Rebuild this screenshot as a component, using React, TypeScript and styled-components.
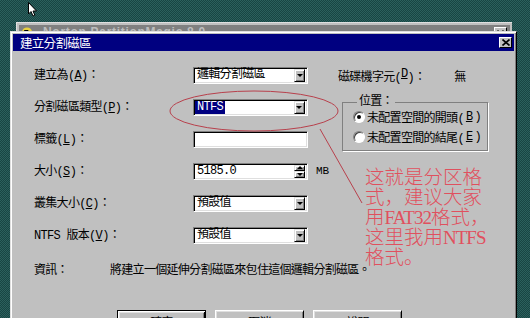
import React from 'react'
import styled, { createGlobalStyle } from 'styled-components'

const GlobalStyle = createGlobalStyle`
  html, body {
    margin: 0;
    padding: 0;
    overflow: hidden;
  }
  body {
    font-family: "Liberation Mono", "Noto Sans CJK TC", monospace;
  }
`

const Desktop = styled.div`
  position: relative;
  width: 530px;
  height: 318px;
  overflow: hidden;
  background: repeating-conic-gradient(#184543 0 25%, #2b605d 0 50%) 0 0 / 2px 2px;
`

const Cursor = styled.svg`
  position: absolute;
  left: 28px;
  top: 2px;
`

/* the PartitionMagic main window behind the dialog */
const BackWindow = styled.div`
  position: absolute;
  left: 16px;
  top: 22px;
  width: 496px;
  height: 300px;
  box-sizing: border-box;
  background: #c0c0c0;
  border-top: 1px solid #dfdfdf;
  border-left: 1px solid #dfdfdf;
  padding: 2px;
`

const BackTitle = styled.div`
  height: 14px;
  background: #808080;
  display: flex;
  align-items: center;
  gap: 10px;
  padding: 0 3px;
  color: #bdbdbd;
  font: bold 12px "Liberation Sans", sans-serif;
  letter-spacing: 0.7px;
`

const BackTitleText = styled.span`
  flex: 1;
`

const SmallButton = styled.div`
  width: 13px;
  height: 11px;
  box-sizing: border-box;
  background: #c0c0c0;
  border: 1px solid;
  border-color: #fff #000 #000 #fff;
  display: flex;
  align-items: center;
  justify-content: center;
`

const Dialog = styled.div`
  position: absolute;
  left: 10px;
  top: 31px;
  width: 507px;
  height: 300px;
  box-sizing: border-box;
  background: #c0c0c0;
  border: 1px solid;
  border-color: #dfdfdf #000 #000 #dfdfdf;
  box-shadow: inset 1px 1px 0 #fff, inset -1px -1px 0 #808080;
  padding: 2px;
  display: flex;
  flex-direction: column;
  font-size: 12px;
  letter-spacing: -0.7px;
  color: #000;
`

const TitleBar = styled.div`
  height: 17px;
  background: #000080;
  color: #fff;
  display: flex;
  align-items: center;
  justify-content: space-between;
  padding: 0 2px 0 7px;
  font-size: 12.5px;
`

const Body = styled.div`
  padding: 8px 0 0 21px;
  display: flex;
  flex-direction: column;
`

const FormGrid = styled.div`
  display: grid;
  grid-template-columns: 159px 115px 1fr;
  grid-auto-rows: 32px;
  align-items: center;
`

const Label = styled.div`
  grid-column: 1;
  line-height: 14px;
  padding-top: 2px;
  white-space: nowrap;
`

const Sunken = styled.div<{ $width?: number }>`
  grid-column: 2;
  width: ${p => p.$width ?? 115}px;
  height: 17px;
  box-sizing: border-box;
  background: #fff;
  border: 1px solid;
  border-color: #808080 #fff #fff #808080;
  box-shadow: inset 1px 1px 0 #000, inset -1px -1px 0 #dfdfdf;
  display: flex;
  align-items: center;
  padding: 2px 2px 2px 1px;
  white-space: nowrap;
`

const FieldText = styled.span<{ $selected?: boolean }>`
  flex: 1;
  padding: 0 2px;
  line-height: 13px;
  ${p => p.$selected && `
    flex: 0 0 auto;
    background: #000080;
    color: #fff;
    margin-right: auto;
  `}
`

const ArrowButton = styled.div`
  width: 11px;
  height: 13px;
  box-sizing: border-box;
  flex: 0 0 auto;
  margin-left: auto;
  background: #c0c0c0;
  border: 1px solid;
  border-color: #dfdfdf #000 #000 #dfdfdf;
  box-shadow: inset 1px 1px 0 #fff, inset -1px -1px 0 #808080;
  display: flex;
  align-items: center;
  justify-content: center;
`

const Triangle = styled.div<{ $up?: boolean }>`
  width: 0;
  height: 0;
  border-left: 3px solid transparent;
  border-right: 3px solid transparent;
  ${p => (p.$up ? 'border-bottom: 3px solid #000;' : 'border-top: 3px solid #000;')}
`

const SpinColumn = styled.div`
  display: flex;
  flex-direction: column;
  margin-left: auto;
  height: 13px;
`

const SpinPart = styled(ArrowButton)`
  height: 6.5px;
  margin-left: 0;
`

const SizeCell = styled.div`
  grid-column: 2 / span 2;
  display: flex;
  align-items: center;
  gap: 8px;
`

const Unit = styled.span`
  font-size: 11px;
  letter-spacing: 0;
`

const DriveInfo = styled.div`
  grid-column: 3;
  grid-row: 1;
  padding: 2px 0 0 30px;
  display: flex;
  white-space: nowrap;
`

const DriveValue = styled.span`
  margin-left: 29px;
`

const GroupBox = styled.fieldset`
  grid-column: 3;
  grid-row: 2 / span 2;
  align-self: start;
  margin: 4px 0 0 34px;
  width: 146px;
  box-sizing: border-box;
  padding: 0 0 4px 10px;
  border: 1px solid #808080;
  box-shadow: 1px 1px 0 #fff;
  min-width: 0;
`

const Legend = styled.legend`
  padding: 0 2px;
  margin-left: 4px;
  line-height: 14px;
`

const RadioList = styled.div`
  display: flex;
  flex-direction: column;
  gap: 2px;
  margin-top: -1px;
`

const RadioRow = styled.div`
  height: 18px;
  display: flex;
  align-items: center;
  gap: 2px;
  white-space: nowrap;
`

const RadioDot = styled.span<{ $checked?: boolean }>`
  width: 12px;
  height: 12px;
  box-sizing: border-box;
  border-radius: 50%;
  background: #fff;
  border: 1px solid;
  border-color: #808080 #fff #fff #808080;
  box-shadow: inset 1px 1px 0 #404040;
  display: flex;
  align-items: center;
  justify-content: center;
  &::after {
    content: '';
    width: 4px;
    height: 4px;
    border-radius: 50%;
    background: ${p => (p.$checked ? '#000' : 'transparent')};
  }
`

const InfoRow = styled.div`
  height: 32px;
  display: flex;
  align-items: center;
  padding-top: 2px;
  white-space: nowrap;
`

const InfoLabel = styled.span`
  width: 76px;
`

const ButtonRow = styled.div`
  display: flex;
  gap: 9px;
  margin: 25px 0 0 83px;
`

const Button = styled.div<{ $default?: boolean }>`
  width: 89px;
  height: 23px;
  box-sizing: border-box;
  background: #c0c0c0;
  border: 1px solid;
  border-color: ${p => (p.$default ? '#000' : '#fff #000 #000 #fff')};
  box-shadow: ${p =>
    p.$default
      ? 'inset 1px 1px 0 #fff, inset -1px -1px 0 #000, inset 2px 2px 0 #dfdfdf, inset -2px -2px 0 #808080'
      : 'inset 1px 1px 0 #dfdfdf, inset -1px -1px 0 #808080'};
  display: flex;
  align-items: center;
  justify-content: center;
`

const Overlay = styled.svg`
  position: absolute;
  left: 0;
  top: 0;
  pointer-events: none;
`

const Annotation = styled.div`
  position: absolute;
  left: 365px;
  top: 168px;
  font-family: "Liberation Serif", "Noto Sans CJK SC", serif;
  font-size: 19.5px;
  line-height: 20px;
  font-weight: 300;
  color: #e0505e;
  white-space: pre;
`

const Latin = styled.span`
  font-size: 19px;
  line-height: 20px;
  letter-spacing: -1px;
`

type SelectProps = { value: string; selected?: boolean }

const Select = ({ value, selected }: SelectProps) => (
  <Sunken>
    <FieldText $selected={selected}>{value}</FieldText>
    <ArrowButton><Triangle /></ArrowButton>
  </Sunken>
)

const App = () => {
  return (
    <>
      <GlobalStyle />
      <Desktop>
        <BackWindow>
          <BackTitle>
            <svg width="11" height="10" viewBox="0 0 11 10">
              <ellipse cx="5" cy="5" rx="5" ry="4.5" fill="#e8d040" />
              <path d="M2 3 L6 3 L8 6 L4 8 Z" fill="#000" />
            </svg>
            <BackTitleText>Norton PartitionMagic 8.0</BackTitleText>
            <SmallButton>
              <svg width="7" height="5" viewBox="0 0 7 5">
                <path d="M0.5 0.5 L3.5 4 L6.5 0.5" stroke="#000" strokeWidth="1.5" fill="none" />
              </svg>
            </SmallButton>
          </BackTitle>
        </BackWindow>

        <Dialog>
          <TitleBar>
            <span>建立分割磁區</span>
            <SmallButton>
              <svg width="8" height="7" viewBox="0 0 8 7">
                <path d="M0.5 0.5 L7.5 6.5 M7.5 0.5 L0.5 6.5" stroke="#000" strokeWidth="1.6" />
              </svg>
            </SmallButton>
          </TitleBar>
          <Body>
            <FormGrid>
              <Label>建立為(<u>A</u>)：</Label>
              <Select value="邏輯分割磁區" />
              <DriveInfo>
                磁碟機字元(<u>D</u>)：<DriveValue>無</DriveValue>
              </DriveInfo>

              <Label>分割磁區類型(<u>P</u>)：</Label>
              <Select value="NTFS" selected />
              <GroupBox>
                <Legend>位置：</Legend>
                <RadioList>
                  <RadioRow><RadioDot $checked />未配置空間的開頭(<u>B</u>)</RadioRow>
                  <RadioRow><RadioDot />未配置空間的結尾(<u>E</u>)</RadioRow>
                </RadioList>
              </GroupBox>

              <Label>標籤(<u>L</u>)：</Label>
              <Sunken />

              <Label>大小(<u>S</u>)：</Label>
              <SizeCell>
                <Sunken>
                  <FieldText>5185.0</FieldText>
                  <SpinColumn>
                    <SpinPart><Triangle $up /></SpinPart>
                    <SpinPart><Triangle /></SpinPart>
                  </SpinColumn>
                </Sunken>
                <Unit>MB</Unit>
              </SizeCell>

              <Label>叢集大小(<u>C</u>)：</Label>
              <Select value="預設值" />

              <Label>NTFS 版本(<u>V</u>)：</Label>
              <Select value="預設值" />
            </FormGrid>

            <InfoRow>
              <InfoLabel>資訊：</InfoLabel>
              <span>將建立一個延伸分割磁區來包住這個邏輯分割磁區。</span>
            </InfoRow>

            <ButtonRow>
              <Button $default>確定</Button>
              <Button>取消</Button>
              <Button>說明</Button>
            </ButtonRow>
          </Body>
        </Dialog>

        <Overlay width="530" height="318" viewBox="0 0 530 318">
          <ellipse cx="254" cy="111" rx="84" ry="20" fill="none" stroke="#b8404c" strokeWidth="1" />
          <line x1="320" y1="129" x2="362" y2="203" stroke="#b8404c" strokeWidth="1" />
        </Overlay>

        <Annotation>
          {'这就是分区格\n式，建议大家\n用'}<Latin>FAT32</Latin>{'格式，\n这里我用'}<Latin>NTFS</Latin>{'\n格式。'}
        </Annotation>

        <Cursor width="10" height="15" viewBox="0 0 10 15">
          <path d="M0.5 0.5 L0.5 12 L3 9.5 L5 14 L6.8 13.2 L5 9 L8.5 9 Z" fill="#fff" stroke="#000" strokeWidth="1" />
        </Cursor>
      </Desktop>
    </>
  )
}

export default App
